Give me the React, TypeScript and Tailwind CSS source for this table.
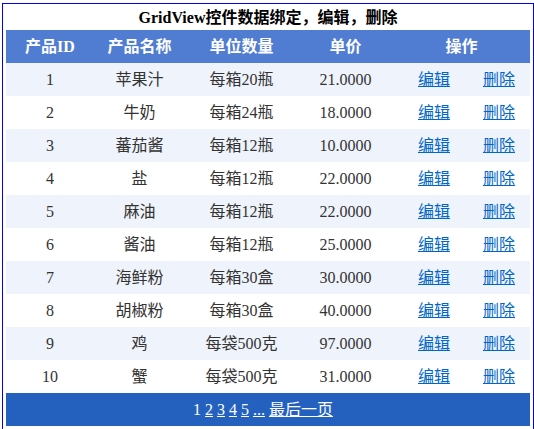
import React from "react";

const rows = [
  ["1", "苹果汁", "每箱20瓶", "21.0000"],
  ["2", "牛奶", "每箱24瓶", "18.0000"],
  ["3", "蕃茄酱", "每箱12瓶", "10.0000"],
  ["4", "盐", "每箱12瓶", "22.0000"],
  ["5", "麻油", "每箱12瓶", "22.0000"],
  ["6", "酱油", "每箱12瓶", "25.0000"],
  ["7", "海鲜粉", "每箱30盒", "30.0000"],
  ["8", "胡椒粉", "每箱30盒", "40.0000"],
  ["9", "鸡", "每袋500克", "97.0000"],
  ["10", "蟹", "每袋500克", "31.0000"],
];

const font = { fontFamily: '"Liberation Serif", "Noto Sans CJK SC", serif' };

export default function App() {
  return (
    <div className="bg-white w-[534px] h-[429px] overflow-hidden pt-[3px] pl-[2px]" style={font}>
      <div className="w-[532px] border border-[#0000ff] px-[3px] pb-[3px] text-[16px] leading-[18px]">
        <div className="h-[26px] flex items-center justify-center font-bold text-black pt-[1px]">
          GridView控件数据绑定，编辑，删除
        </div>
        <div className="w-[524px]">
          <div className="grid grid-cols-[88px_91px_113px_95px_137px] h-[33px] bg-[#507CD1] text-white font-bold items-center text-center">
            <div>产品ID</div>
            <div>产品名称</div>
            <div>单位数量</div>
            <div>单价</div>
            <div>操作</div>
          </div>
          {rows.map((r, i) => (
            <div
              key={r[0]}
              className={`grid grid-cols-[88px_91px_113px_95px_82px_55px] h-[33px] items-center text-center text-[#333333] ${
                i % 2 === 0 ? "bg-[#EFF3FB]" : "bg-white"
              }`}
            >
              <div>{r[0]}</div>
              <div>{r[1]}</div>
              <div>{r[2]}</div>
              <div>{r[3]}</div>
              <div>
                <a className="text-[#0066CC] underline cursor-pointer">编辑</a>
              </div>
              <div className="pr-[7px]">
                <a className="text-[#0066CC] underline cursor-pointer">删除</a>
              </div>
            </div>
          ))}
          <div className="h-[33px] bg-[#2461BF] text-white flex items-center justify-center pr-[10px]">
            <span className="whitespace-pre">
              <span>1</span> <a className="underline">2</a> <a className="underline">3</a>{" "}
              <a className="underline">4</a> <a className="underline">5</a> <a className="underline">...</a>{" "}
              <a className="underline">最后一页</a>
            </span>
          </div>
        </div>
      </div>
    </div>
  );
}
